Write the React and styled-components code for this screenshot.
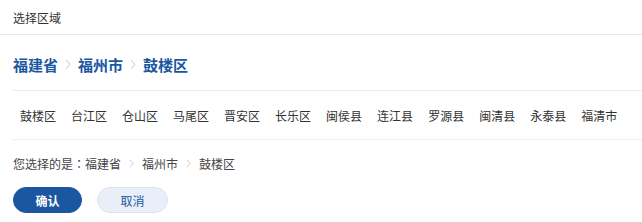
import React, { useState } from "react";
import styled, { createGlobalStyle } from "styled-components";

const BLUE = "#1b57a1";

const GlobalStyle = createGlobalStyle`
  body {
    margin: 0;
    background: #fff;
    font-family: "Noto Sans CJK SC", "Noto Sans", sans-serif;
    color: #333;
  }
`;

const Panel = styled.div`
  width: 642px;
  height: 222px;
  background: #fff;
`;

const Title = styled.div`
  height: 35px;
  padding: 0 13px;
  display: flex;
  align-items: center;
  font-size: 12px;
  color: #333;
  border-bottom: 1px solid #e6e6e6;
  box-sizing: border-box;
`;

const Body = styled.div`
  padding-left: 13px;
`;

const Crumbs = styled.div`
  height: 56px;
  display: flex;
  align-items: center;
  border-bottom: 1px solid #ececec;
  box-sizing: border-box;
  padding-top: 4px;
`;

const Crumb = styled.span`
  font-size: 15px;
  font-weight: 700;
  color: ${BLUE};
  line-height: 20px;
  cursor: pointer;
`;

const Chevron = ({ size = 6, gap = 7 }) => (
  <svg
    width={size}
    height={size * 1.8}
    viewBox="0 0 6 11"
    style={{ margin: `0 ${gap}px` }}
  >
    <path d="M1 1l4 4.5L1 10" fill="none" stroke="#c4c4c4" strokeWidth="1" />
  </svg>
);

const Districts = styled.div`
  height: 49px;
  display: flex;
  align-items: center;
  border-bottom: 1px solid #ececec;
  box-sizing: border-box;
  padding-top: 1px;
`;

const District = styled.span`
  font-size: 12px;
  line-height: 16px;
  padding: 0 7.5px;
  color: ${(p) => (p.$active ? BLUE : "#333")};
  cursor: pointer;
`;

const Summary = styled.div`
  height: 45px;
  display: flex;
  align-items: center;
  font-size: 12px;
  color: #444;
  padding-top: 2px;
  box-sizing: border-box;
`;

const Colon = styled.span`
  font-family: "Noto Sans CJK TC", sans-serif;
`;

const Actions = styled.div`
  display: flex;
  gap: 15px;
  margin-top: 2px;
`;

const Button = styled.button`
  width: ${(p) => (p.$primary ? "69px" : "71px")};
  height: 26px;
  border-radius: 13px;
  font-family: inherit;
  font-size: 12px;
  font-weight: ${(p) => (p.$primary ? 700 : 400)};
  color: ${(p) => (p.$primary ? "#fff" : BLUE)};
  background: ${(p) => (p.$primary ? BLUE : "#e9eef8")};
  border: 1px solid ${(p) => (p.$primary ? BLUE : "#dde3ee")};
  padding: 0;
  cursor: pointer;
`;

const districts = [
  "鼓楼区", "台江区", "仓山区", "马尾区", "晋安区", "长乐区",
  "闽侯县", "连江县", "罗源县", "闽清县", "永泰县", "福清市",
];

const App = () => {
  const [picked] = useState("鼓楼区");
  const path = ["福建省", "福州市", picked];

  return (
    <Panel>
      <GlobalStyle />
      <Title>选择区域</Title>
      <Body>
        <Crumbs>
          {path.map((p, i) => (
            <React.Fragment key={p}>
              {i > 0 && <Chevron gap={7} />}
              <Crumb>{p}</Crumb>
            </React.Fragment>
          ))}
        </Crumbs>
        <Districts>
          {districts.map((d, i) => (
            <District key={d} style={i === 0 ? { paddingLeft: 7 } : undefined}>
              {d}
            </District>
          ))}
        </Districts>
        <Summary>
          您选择的是<Colon>：</Colon>
          {path.map((p, i) => (
            <React.Fragment key={p}>
              {i > 0 && <Chevron size={5} gap={8} />}
              <span>{p}</span>
            </React.Fragment>
          ))}
        </Summary>
        <Actions>
          <Button $primary>确认</Button>
          <Button>取消</Button>
        </Actions>
      </Body>
    </Panel>
  );
};

export default App;
